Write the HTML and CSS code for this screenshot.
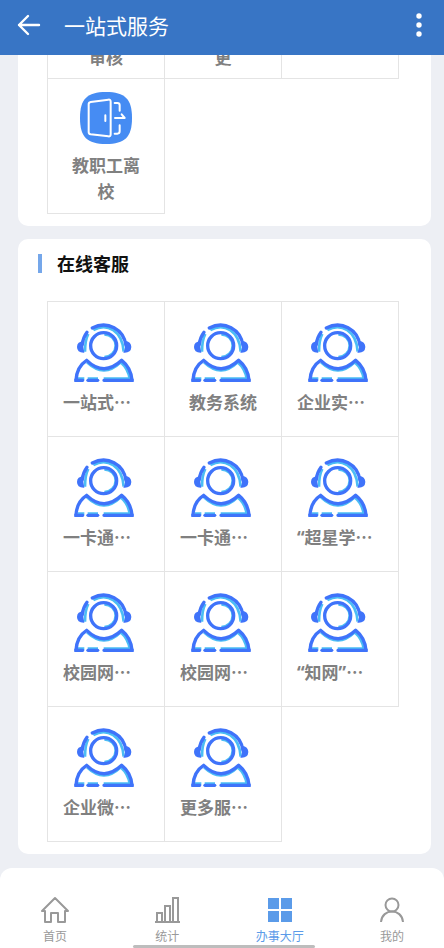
FILE: index.html
```html
<!DOCTYPE html>
<html lang="zh-CN">
<head>
<meta charset="utf-8">
<meta name="viewport" content="width=device-width, initial-scale=1">
<title>一站式服务</title>
<link rel="stylesheet" href="styles.css">
</head>
<body>
<svg class="sprite" aria-hidden="true">
  <symbol id="agent" viewBox="41 23 180 180">
    <g fill="none" stroke="#4bbdf5" stroke-width="8">
      <path d="M99 47C141 24 186 50 190 112"/>
      <path d="M84 59Q74 78 74 112"/>
      <path d="M132 60A34 34 0 0 1 132 128"/>
      <path d="M80 144Q131 192 181 144Q204 164 208 194"/>
      <path d="M52 193H72M82 193H113M130 193H210"/>
    </g>
    <g fill="none" stroke="#3f73fa" stroke-width="10" stroke-linecap="round" stroke-linejoin="round">
      <path d="M96 41C141 17 191 45 197 94"/>
      <path d="M80 54Q68 70 66 90"/>
      <circle cx="130" cy="94" r="39"/>
      <path stroke-linecap="butt" d="M42 198H50M211 198H220"/>
      <path d="M67 198H47Q49 157 79 138Q131 188 184 138Q212 160 215 198H131"/>
      <path d="M83 198H112"/>
    </g>
    <path fill="#3f73fa" d="M70 81Q50 82 50 98Q50 116 72 115Q67 100 70 81ZM194 79Q213 82 213 98Q212 117 189 115Q197 99 194 79Z"/>
  </symbol>
</svg>

<header class="topbar">
  <button class="icon-btn" type="button" aria-label="返回">
    <svg width="24" height="22" viewBox="0 0 24 22"><path d="M11 2 2 11l9 9M2 11h20" fill="none" stroke="#fff" stroke-width="2.4" stroke-linecap="round" stroke-linejoin="round"/></svg>
  </button>
  <h1 class="topbar-title">一站式服务</h1>
  <button class="icon-btn icon-btn-more" type="button" aria-label="更多">
    <svg width="6" height="26" viewBox="0 0 6 26" fill="#fff"><circle cx="3" cy="4" r="2.7"/><circle cx="3" cy="13" r="2.7"/><circle cx="3" cy="22" r="2.7"/></svg>
  </button>
</header>

<main class="content">
  <section class="card">
    <div class="grid">
      <a class="cell cell-end" href="#"><span class="label">审核</span></a>
      <a class="cell cell-end" href="#"><span class="label">更</span></a>
      <div class="cell"></div>
      <a class="cell cell-tall" href="#">
        <svg class="app-icon" viewBox="0 0 156 156">
          <path fill="#468cf3" d="M78 0C135 0 156 21 156 78S135 156 78 156S0 135 0 78S21 0 78 0Z"/>
          <g fill="none" stroke="#fff" stroke-width="6" stroke-linecap="round" stroke-linejoin="round">
            <path d="M32 30 85 23Q92 22 92 29V127Q92 134 85 133L32 127Q26 126 26 120V37Q26 31 32 30Z"/>
            <path d="M76 70V87M104 33H112Q119 33 119 40V56M104 125H112Q119 125 119 118V100M105 78H134L125 67"/>
          </g>
        </svg>
        <span class="label label-wrap">教职工离校</span>
      </a>
    </div>
  </section>

  <section class="card">
    <h2 class="card-title">在线客服</h2>
    <div class="grid">
      <a class="cell" href="#"><svg class="agent"><use href="#agent"/></svg><span class="label label-cut">一站式…</span></a>
      <a class="cell" href="#"><svg class="agent"><use href="#agent"/></svg><span class="label">教务系统</span></a>
      <a class="cell" href="#"><svg class="agent"><use href="#agent"/></svg><span class="label label-cut">企业实…</span></a>
      <a class="cell" href="#"><svg class="agent"><use href="#agent"/></svg><span class="label label-cut">一卡通…</span></a>
      <a class="cell" href="#"><svg class="agent"><use href="#agent"/></svg><span class="label label-cut">一卡通…</span></a>
      <a class="cell" href="#"><svg class="agent"><use href="#agent"/></svg><span class="label label-cut"><span class="quote">“</span>超星学…</span></a>
      <a class="cell" href="#"><svg class="agent"><use href="#agent"/></svg><span class="label label-cut">校园网…</span></a>
      <a class="cell" href="#"><svg class="agent"><use href="#agent"/></svg><span class="label label-cut">校园网…</span></a>
      <a class="cell" href="#"><svg class="agent"><use href="#agent"/></svg><span class="label label-cut"><span class="quote">“</span>知网<span class="quote">”</span>…</span></a>
      <a class="cell" href="#"><svg class="agent"><use href="#agent"/></svg><span class="label label-cut">企业微…</span></a>
      <a class="cell" href="#"><svg class="agent"><use href="#agent"/></svg><span class="label label-cut">更多服…</span></a>
    </div>
  </section>
</main>

<nav class="tabbar">
  <a class="tab" href="#">
    <svg width="30" height="28" viewBox="0 0 30 28" fill="none" stroke="#999" stroke-width="2" stroke-linejoin="round"><path d="M15 2 2 15H5V26H11V17H18V26H25V15H28Z"/></svg>
    <span>首页</span>
  </a>
  <a class="tab" href="#">
    <svg width="28" height="28" viewBox="0 0 28 28" fill="none" stroke="#999" stroke-width="2"><path d="M2 26H27M4 26V17H9V26M12 26V10H17V26M20 26V2H25V26"/></svg>
    <span>统计</span>
  </a>
  <a class="tab tab-active" href="#">
    <svg width="26" height="28" viewBox="0 0 26 28" fill="#5b9be9"><path d="M1 2H12V13H1ZM14 2H25V13H14ZM1 15H12V26H1ZM14 15H25V26H14Z"/></svg>
    <span>办事大厅</span>
  </a>
  <a class="tab" href="#">
    <svg width="26" height="28" viewBox="0 0 26 28" fill="none" stroke="#999" stroke-width="2"><circle cx="13" cy="9" r="6.5"/><path d="M2 26C3 12 23 12 24 26"/></svg>
    <span>我的</span>
  </a>
  <div class="home-bar"></div>
</nav>
</body>
</html>
```
FILE: styles.css
```css
* { box-sizing: border-box; }

body {
  margin: 0;
  height: 100vh;
  display: flex;
  flex-direction: column;
  background: #edeff4;
  font-family: "Noto Sans CJK SC", sans-serif;
  color: #808080;
}

a { color: inherit; text-decoration: none; }
svg { display: block; flex: none; }
.sprite { position: absolute; width: 0; height: 0; }

.topbar {
  flex: none;
  display: flex;
  align-items: center;
  height: 55px;
  padding: 0 16px 5px 17px;
  background: #3875c5;
}

.topbar-title {
  flex: 1;
  margin: 0 0 0 23px;
  color: #fff;
  font-size: 21px;
  font-weight: 400;
  line-height: 32px;
}

.icon-btn {
  padding: 0;
  border: 0;
  background: none;
}
.icon-btn-more { padding: 0 6px; }

.content {
  flex: 1;
  min-height: 0;
  overflow: hidden;
  display: flex;
  flex-direction: column;
  justify-content: flex-end;
  gap: 13px;
  padding: 0 13px 14px 18px;
}

.card {
  flex: none;
  padding-bottom: 13px;
  border-radius: 10px;
  background: #fff;
}

.card-title {
  display: flex;
  align-items: center;
  gap: 15px;
  margin: 0;
  padding: 11px 20px 25px;
  color: #111;
  font-size: 18px;
  font-weight: 700;
  line-height: 26px;
}
.card-title::before {
  content: "";
  width: 4px;
  height: 19px;
  background: #75a7ea;
}

.grid {
  display: grid;
  grid-template-columns: repeat(3, 1fr);
  grid-auto-rows: 135px;
  padding: 0 33px 0 29px;
}

.cell {
  display: flex;
  flex-direction: column;
  align-items: center;
  margin: 0 -1px -1px 0;
  padding: 20px 15px 0;
  border: 1px solid #e4e4e4;
}
.cell-end { justify-content: flex-end; padding-bottom: 8px; }
.cell-tall { padding-top: 13px; }

.agent { width: 60px; height: 60px; margin-right: 4px; }
.app-icon { width: 52px; height: 52px; margin-bottom: 1px; }

.label {
  font-size: 17px;
  font-weight: 700;
  line-height: 26px;
  margin-top: 7px;
  white-space: nowrap;
}
.label-cut { align-self: flex-start; }
.label-wrap { width: 72px; white-space: normal; text-align: center; }
.quote { font-family: "Noto Sans", sans-serif; }

.tabbar {
  flex: none;
  position: relative;
  display: flex;
  justify-content: space-between;
  height: 80px;
  padding: 28px 27px 0 30px;
  border-radius: 12px 12px 0 0;
  background: #fff;
}

.tab {
  width: 50px;
  display: flex;
  flex-direction: column;
  align-items: center;
  gap: 3px;
  color: #999;
  font-size: 12px;
  line-height: 18px;
  white-space: nowrap;
}
.tab-active { color: #5b9be9; }

.home-bar {
  position: absolute;
  bottom: 0;
  left: 30%;
  right: 29%;
  height: 3px;
  border-radius: 2px;
  background: #bdbdbd;
}
```
